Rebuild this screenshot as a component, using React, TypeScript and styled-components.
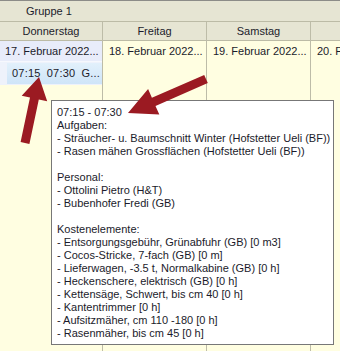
import React from "react";
import styled, { createGlobalStyle } from "styled-components";

const Global = createGlobalStyle`
  html, body { margin: 0; padding: 0; background: #fffee1; }
  body { font-family: "Liberation Sans", Arial, sans-serif; font-size: 11px; color: #1b1b2b; }
`;

const Page = styled.div`
  position: relative;
  width: 340px;
  height: 351px;
  overflow: hidden;
  background: #fffee1;
`;

const GroupRow = styled.div`
  height: 20px;
  line-height: 21px;
  border-top: 1px solid #8c8c88;
  border-bottom: 1px solid #bcbba6;
  background: #e6e5d3;
  padding-left: 26px;
`;

const Columns = styled.div`
  display: flex;
  height: 330px;
`;

const Column = styled.div<{ $w: number }>`
  width: ${(p) => p.$w}px;
  flex: none;
  display: flex;
  flex-direction: column;
  border-right: 1px solid #bdbca8;
`;

const DayHeader = styled.div`
  height: 18px;
  line-height: 19px;
  text-align: center;
  background: #e6e5d3;
  border-bottom: 1px solid #bcbba6;
  white-space: nowrap;
  overflow: hidden;
`;

const DateCell = styled.div<{ $sel?: boolean }>`
  height: 20px;
  line-height: 21px;
  padding-left: ${(p) => (p.$sel ? 5 : 6)}px;
  background: ${(p) => (p.$sel ? "#e8ecfa" : "transparent")};
  border-bottom: 1px solid ${(p) => (p.$sel ? "#f6f8fd" : "transparent")};
  white-space: nowrap;
  overflow: hidden;
`;

const EventRow = styled.div`
  height: 23px;
  padding: 1px 0 0 7px;
  background: #eef2fb;
  box-sizing: border-box;
`;

const EventBox = styled.div`
  height: 21px;
  line-height: 21px;
  padding-left: 5px;
  background: linear-gradient(#e2f0fb, #cfe5f8);
  letter-spacing: 0.2px;
  word-spacing: 3px;
  white-space: nowrap;
  overflow: hidden;
`;

const Tooltip = styled.div`
  position: absolute;
  left: 51px;
  top: 100px;
  width: 271px;
  height: 234px;
  padding: 5px 5px 4px 5px;
  background: #ffffff;
  border: 1px solid #777777;
  line-height: 13px;
  white-space: pre;
`;

const Line = styled.div`
  height: 13px;
`;

const ArrowLayer = styled.svg`
  position: absolute;
  left: 0;
  top: 0;
  pointer-events: none;
`;

function arrowPoints(tx: number, ty: number, hx: number, hy: number, shaft: number, headL: number, headW: number) {
  const dx = hx - tx;
  const dy = hy - ty;
  const len = Math.hypot(dx, dy);
  const ux = dx / len;
  const uy = dy / len;
  const nx = -uy;
  const ny = ux;
  const bx = hx - ux * headL;
  const by = hy - uy * headL;
  const pts = [
    [tx + nx * shaft / 2, ty + ny * shaft / 2],
    [bx + nx * shaft / 2, by + ny * shaft / 2],
    [bx + nx * headW / 2, by + ny * headW / 2],
    [hx, hy],
    [bx - nx * headW / 2, by - ny * headW / 2],
    [bx - nx * shaft / 2, by - ny * shaft / 2],
    [tx - nx * shaft / 2, ty - ny * shaft / 2],
  ];
  return pts.map((p) => p.map((v) => v.toFixed(1)).join(",")).join(" ");
}

const columns = [
  { w: 102, day: "Donnerstag", date: "17. Februar 2022...", sel: true },
  { w: 103, day: "Freitag", date: "18. Februar 2022..." },
  { w: 103, day: "Samstag", date: "19. Februar 2022..." },
  { w: 60, day: "", date: "20. Februar 2022..." },
];

const tooltipLines = [
  "07:15 - 07:30",
  "Aufgaben:",
  "- Sträucher- u. Baumschnitt Winter (Hofstetter Ueli (BF))",
  "- Rasen mähen Grossflächen (Hofstetter Ueli (BF))",
  "",
  "Personal:",
  "- Ottolini Pietro (H&T)",
  "- Bubenhofer Fredi (GB)",
  "",
  "Kostenelemente:",
  "- Entsorgungsgebühr, Grünabfuhr (GB) [0 m3]",
  "- Cocos-Stricke, 7-fach (GB) [0 m]",
  "- Lieferwagen, -3.5 t, Normalkabine (GB) [0 h]",
  "- Heckenschere, elektrisch (GB) [0 h]",
  "- Kettensäge, Schwert, bis cm 40 [0 h]",
  "- Kantentrimmer [0 h]",
  "- Aufsitzmäher, cm 110 -180 [0 h]",
  "- Rasenmäher, bis cm 45 [0 h]",
];

export default function App() {
  return (
    <Page>
      <Global />
      <GroupRow>Gruppe 1</GroupRow>
      <Columns>
        {columns.map((c, i) => (
          <Column key={i} $w={c.w}>
            <DayHeader>{c.day}</DayHeader>
            <DateCell $sel={c.sel}>{c.date}</DateCell>
            {c.sel && (
              <EventRow>
                <EventBox>07:15 07:30 G...</EventBox>
              </EventRow>
            )}
          </Column>
        ))}
      </Columns>
      <Tooltip>
        {tooltipLines.map((l, i) => (
          <Line key={i}>{l}</Line>
        ))}
      </Tooltip>
      <ArrowLayer width={340} height={351} viewBox="0 0 340 351">
        <polygon points={arrowPoints(25, 143, 39, 77, 9, 22, 26)} fill="#9b1a22" />
        <polygon points={arrowPoints(206, 79, 128, 113, 9, 28, 28)} fill="#9b1a22" />
      </ArrowLayer>
    </Page>
  );
}
